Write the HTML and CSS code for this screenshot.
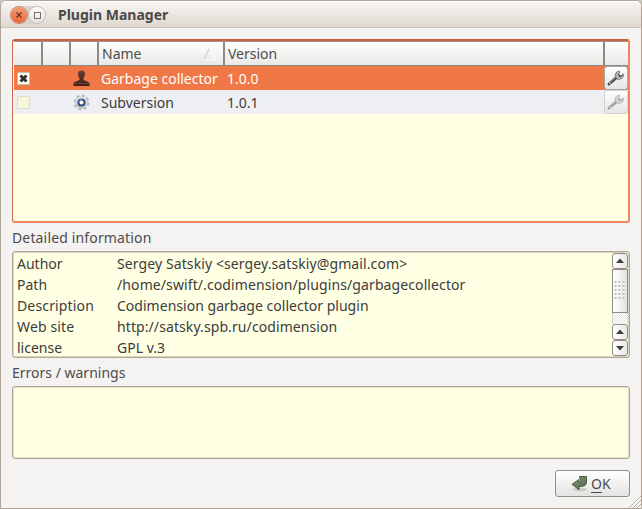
FILE: index.html
```html
<!DOCTYPE html>
<html lang="en">
<head>
<meta charset="utf-8">
<title>Plugin Manager</title>
<link rel="stylesheet" href="styles.css">
</head>
<body>
<svg width="0" height="0" class="defs">
  <defs>
    <linearGradient id="gear" x1="0" y1="0" x2="0" y2="1"><stop offset="0" stop-color="#eeeff0"/><stop offset="1" stop-color="#bfc3c6"/></linearGradient>
    <linearGradient id="stamp" x1="0" y1="0" x2="0" y2="1"><stop offset="0" stop-color="#654033"/><stop offset="1" stop-color="#402018"/></linearGradient>
    <linearGradient id="arrow" x1="0" y1="0" x2="1" y2="1"><stop offset="0" stop-color="#8a9d7d"/><stop offset="1" stop-color="#4e6544"/></linearGradient>
    <symbol id="wrench" viewBox="0 0 18 18">
      <path d="M2 15 L9.5 8.6" stroke="#444" stroke-width="2.8" stroke-linecap="round"/>
      <path d="M2.3 14.2 L9 8.3" stroke="#999" stroke-width=".9" stroke-linecap="round"/>
      <path d="M8.3 7.8 C7.7 4.5 9.6 2.3 12.3 2.2 L13 3.1 L11.4 5.1 L12.6 7.2 L14.9 6.5 L15.9 4.6 L16.7 5.6 C17 8.4 14.2 10.7 10.4 10.2Z" fill="#b4b6b6" stroke="#686b6a" stroke-width=".9"/>
      <path d="M11.7 4.9 L12.5 7.3 L15.2 6.7" stroke="#333" fill="none"/>
      <circle cx="3" cy="14.2" r=".8" fill="#ddd"/>
    </symbol>
  </defs>
</svg>
<div class="window">
  <header class="titlebar">
    <div class="controls">
      <span class="ctl close"><svg width="16" height="16" viewBox="0 0 16 16"><path d="M5.5 5.5l5 5M10.5 5.5l-5 5" stroke="#5e3024" stroke-width="1.1"/></svg></span>
      <span class="ctl"><svg width="16" height="16" viewBox="0 0 16 16"><rect x="5.5" y="5.5" width="6" height="6" fill="none" stroke="#77726b"/></svg></span>
    </div>
    <h1>Plugin Manager</h1>
  </header>
  <main>
    <section class="table">
      <div class="row head">
        <span></span><span></span><span></span>
        <span class="name"><b class="t-name">Name</b><svg width="14" height="14" viewBox="0 0 14 14"><path d="M1 13L6.5 1" stroke="#c9c7c4" fill="none"/><path d="M6.5 1L12.5 13H1" stroke="#fff" fill="none"/></svg></span>
        <span><b class="t-version">Version</b></span><span></span>
      </div>
      <div class="row selected">
        <span class="c-check"><i class="check"><svg width="11" height="11" viewBox="0 0 11 11"><path d="M2.5 2.5l6 6M8.5 2.5l-6 6" stroke="#303030" stroke-width="3"/></svg></i></span><span></span>
        <span class="c-icon"><svg width="17" height="17" viewBox="0 0 17 17"><path d="M5 4C5 1.5 6.5.5 8.5.5S12 1.5 12 4C12 6.5 10.4 7.6 10.4 9.5C10.4 10.8 15.5 11.3 16.5 13V16H.5V13C1.5 11.3 6.6 10.8 6.6 9.5C6.6 7.6 5 6.5 5 4Z" fill="url(#stamp)"/><path d="M1 13.5H16" stroke="#724334"/></svg></span>
        <span class="cell"><b>Garbage collector</b></span><span class="cell"><b>1.0.0</b></span>
        <span class="tool"><svg width="18" height="18"><use href="#wrench"/></svg></span>
      </div>
      <div class="row alt">
        <span class="c-check"><i class="check off"></i></span><span></span>
        <span class="c-icon"><svg width="17" height="17" viewBox="0 0 17 17"><circle cx="8.5" cy="8.5" r="6.7" fill="none" stroke="#b5b8bb" stroke-width="2.4" stroke-dasharray="3 2.262"/><circle cx="8.5" cy="8.5" r="6" fill="url(#gear)" stroke="#c6c9cc" stroke-width=".7"/><circle cx="8.5" cy="8.5" r="3.1" fill="#fff" stroke="#315082" stroke-width="2"/><path d="M6 7.5A3.2 3.2 0 0 1 9 5.3" stroke="#7b9bc5" fill="none"/></svg></span>
        <span class="cell"><b>Subversion</b></span><span class="cell"><b>1.0.1</b></span>
        <span class="tool disabled"><svg width="18" height="18"><use href="#wrench"/></svg></span>
      </div>
    </section>
    <div class="label"><b class="t-detail">Detailed information</b></div>
    <section class="details">
      <dl>
        <dt>Author</dt><dd><b class="t-mail">Sergey Satskiy &lt;sergey.satskiy@gmail.com&gt;</b></dd>
        <dt>Path</dt><dd><b class="t-dir">/home/swift/.codimension/plugins/garbagecollector</b></dd>
        <dt class="t-desc">Description</dt><dd><b class="t-plugin">Codimension garbage collector plugin</b></dd>
        <dt class="t-desc">Web site</dt><dd><b class="t-url">http://satsky.spb.ru/codimension</b></dd>
        <dt>license</dt><dd><b>GPL v.3</b></dd>
      </dl>
      <div class="scroll">
        <i class="sb"><svg width="14" height="14" viewBox="0 0 14 14"><path d="M3 9H11L7 4.5Z" fill="#3c3c3c"/></svg></i>
        <i class="thumb"><svg width="12" height="20" viewBox="0 0 12 20"><path d="M.5 1H12M.5 5H12M.5 9H12M.5 13H12M.5 17H12" stroke="#bbb8b4" stroke-width="2" stroke-dasharray="2 2"/><path d="M1.5 2H12M1.5 6H12M1.5 10H12M1.5 14H12M1.5 18H12" stroke="#fff" stroke-dasharray="1 3"/></svg></i>
        <i class="track"></i>
        <i class="sb"><svg width="14" height="14" viewBox="0 0 14 14"><path d="M3 9H11L7 4.5Z" fill="#3c3c3c"/></svg></i>
        <i class="sb"><svg width="14" height="14" viewBox="0 0 14 14"><path d="M3 5H11L7 9.5Z" fill="#3c3c3c"/></svg></i>
      </div>
    </section>
    <div class="label err"><b>Errors / warnings</b></div>
    <section class="errors"></section>
    <footer>
      <button class="ok"><svg width="18" height="18" viewBox="0 0 18 18"><ellipse cx="9" cy="14.5" rx="7" ry="1.8" fill="#aaa" opacity=".5"/><path d="M8.5 1.5H15.5V7.5C15.5 10 13.5 11.5 8 11.5V14.8L1 9.3L8 4.5V7.3C9.3 7.3 9.5 6.6 9.5 5.5Z" fill="url(#arrow)" stroke="#3f4f38" stroke-width=".9"/></svg><b><u>O</u>K</b></button>
    </footer>
  </main>
  <svg class="grip" width="13" height="13" viewBox="0 0 13 13"><path d="M1 13L13 1M5 13L13 5M9 13L13 9" stroke="#b5afa8"/><path d="M2.2 13L13 2.2M6.2 13L13 6.2M10.2 13L13 10.2" stroke="#fff"/></svg>
</div>
</body>
</html>
```
FILE: styles.css
```css
* { box-sizing: border-box; }
body { margin: 0; background: #c9c7b8; font: 14px/20px "Noto Sans", "Open Sans", sans-serif; color: #3c3c3c; overflow: hidden; }
b { font-weight: 400; white-space: nowrap; }
i { font-style: normal; display: block; }
svg { display: block; flex: none; }
.defs { position: absolute; }
.window { position: relative; width: 642px; height: 509px; border: 1px solid #b0a498; border-radius: 6px 6px 0 0; background: #f5f3f2; overflow: hidden; }
.titlebar { height: 27px; display: flex; align-items: center; padding: 1px 0 0 9px; background: linear-gradient(#f8f6f4, #dfd8d0); border-bottom: 1px solid #d0c4ba; box-shadow: inset 0 1px #fff; }
.controls { display: flex; gap: 2px; padding: 1px; border-radius: 10px; background: #d9d4ce; }
.ctl { width: 16px; height: 16px; border-radius: 50%; background: linear-gradient(#fff, #e4dfda); box-shadow: 0 0 0 1px #c4bdb5; }
.close { background: linear-gradient(#f69a77, #ec683c); box-shadow: 0 0 0 1px #c98467; }
h1 { margin: 0 0 0 12px; font-size: 14px; line-height: 20px; font-weight: 700; color: #4c4a47; white-space: nowrap; }
main { padding: 11px 11px 0; }
.table { height: 184px; border: 2px solid #f2855f; border-top-color: #cc6340; border-left: 1px solid #ce6543; border-radius: 3px; padding-left: 1px; background: #ffffe3; }
.row { display: grid; grid-template-columns: 29px 28px 28px 126px 380px 23px; height: 24px; align-items: center; }
.row > span { padding-left: 3px; display: flex; align-items: center; height: 24px; }
.head { height: 25px; border-top: 1px solid #999691; border-bottom: 1px solid #8d8a85; background: linear-gradient(#fff, #eae8e6); }
.head > span { height: 23px; border-right: 2px solid #8d8a85; color: #4c4c4c; }
.head > span:last-child { border-right: 0; }
.head .name { justify-content: space-between; padding-right: 6px; }
.row > .cell { padding: 2px 0 0 2px; }
.selected { background: #f07746; color: #fff; }
.alt { background: #edeff2; }
.check { width: 13px; height: 13px; border: 1px solid #c3c0a3; border-radius: 1px; background: #fffff2; }
.check.off { background: #f7f7dd; border-color: #deddc7; }
.row .c-icon { padding-left: 2px; }
.row .tool { margin-left: -1px; border: 1px solid #aaa7a3; border-radius: 3px; background: linear-gradient(#fff, #e8e6e4); padding: 0 2px; }
.row .disabled { border-color: #d3d1ce; }
.disabled svg { opacity: .5; }
.label { height: 28px; padding: 5px 0 3px; color: #4c4c4c; }
.t-detail { letter-spacing: .15px; }
.details { height: 107px; border: 1px solid #aaa995; border-radius: 3px; box-shadow: inset 0 0 0 1px #d7d7bf; background: #ffffe3; display: flex; justify-content: space-between; padding: 1px 1px 1px 4px; overflow: hidden; }
dl { margin: 0; display: grid; grid-template-columns: 100px auto; grid-auto-rows: 21px; line-height: 21px; }
dd { margin: 0; }
.t-mail, .t-dir { letter-spacing: .1px; }
.t-desc { letter-spacing: .15px; }
.t-plugin { letter-spacing: .02px; }
.t-url { letter-spacing: .09px; }
.scroll { width: 16px; height: 103px; display: flex; flex-direction: column; }
.sb { height: 16px; flex: none; border: 1px solid #8f8c88; border-radius: 3px; background: linear-gradient(90deg, #fff, #e9e7e5); }
.thumb { height: 44px; flex: none; border: 1px solid #8f8c88; background: linear-gradient(90deg, #fff, #e5e3e1); display: flex; align-items: center; justify-content: center; }
.track { flex: 1; background: repeating-conic-gradient(#fff 0 25%, #e7e5e2 0 50%) 0 0 / 2px 2px; border: dotted #c4c1bd; border-width: 0 1px; }
.errors { height: 73px; border: 1px solid #aaa995; border-radius: 3px; box-shadow: inset 0 0 0 1px #e3e3cb; background: #ffffe3; }
footer { display: flex; justify-content: flex-end; padding-top: 11px; }
.ok { width: 75px; height: 27px; padding: 0 0 0 15px; display: flex; align-items: center; gap: 2px; border: 1px solid #918e8a; border-radius: 3px; background: linear-gradient(#fff, #e5e3e1); font: inherit; color: #4c4c4c; }
u { text-underline-offset: 3px; text-decoration-thickness: 1px; }
.grip { position: absolute; right: 0; bottom: 0; }
```
